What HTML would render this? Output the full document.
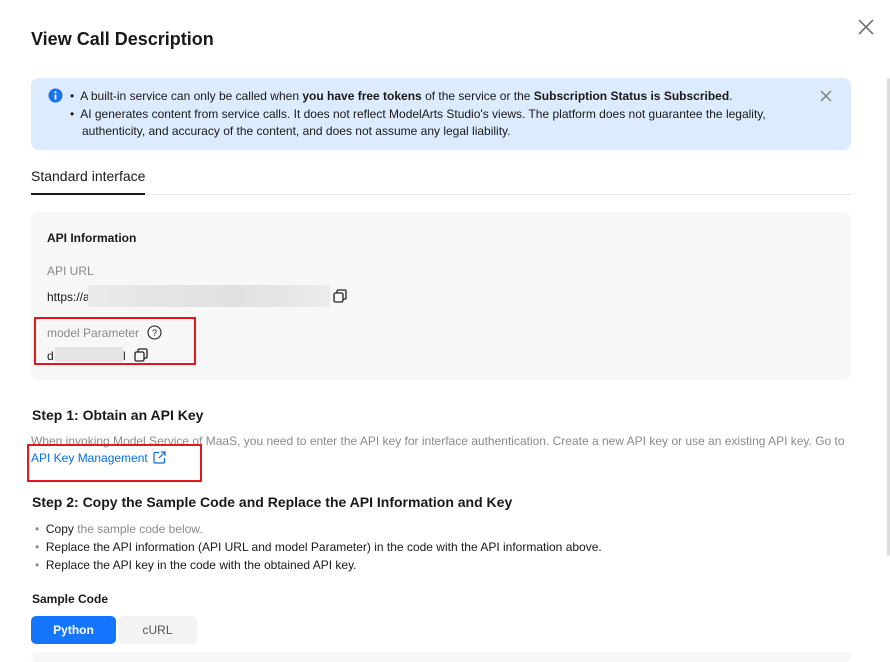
<!DOCTYPE html>
<html><head><style>
*{margin:0;padding:0;box-sizing:border-box}
body{width:890px;height:658px;overflow:hidden;background:#fff;font-family:"Liberation Sans",sans-serif;color:#191919;position:relative}
.a{position:absolute}
.t12{font-size:12px}
.g{color:#8a8a8a}
</style></head><body>
<div class="a" style="left:31px;top:29px;font-size:18px;font-weight:bold">View Call Description</div>
<svg class="a" style="left:857px;top:18px" width="18" height="18"><path d="M2 2L16 16M16 2L2 16" stroke="#777" stroke-width="1.6"/></svg>
<div class="a" style="left:887px;top:78px;width:3px;height:478px;background:#ddd;border-radius:2px"></div>

<div class="a" style="left:31px;top:78px;width:820px;height:72px;background:#dcebfd;border-radius:8px"></div>
<svg class="a" style="left:48px;top:88px" width="15" height="15"><circle cx="7.5" cy="7.5" r="7" fill="#1a73e8"/><rect x="6.6" y="6.5" width="1.8" height="5" fill="#fff"/><circle cx="7.5" cy="4.3" r="1.1" fill="#fff"/></svg>
<svg class="a" style="left:820px;top:90px" width="12" height="12"><path d="M1 1L11 11M11 1L1 11" stroke="#777" stroke-width="1.3"/></svg>
<div class="a t12" style="left:70px;top:88px;line-height:17.5px;width:740px">
<div>•&nbsp; A built-in service can only be called when <b>you have free tokens</b> of the service or the <b>Subscription Status is Subscribed</b>.</div>
<div>•&nbsp; AI generates content from service calls. It does not reflect ModelArts Studio's views. The platform does not guarantee the legality,</div>
<div style="padding-left:12px">authenticity, and accuracy of the content, and does not assume any legal liability.</div>
</div>

<div class="a" style="left:31px;top:168px;font-size:14px">Standard interface</div>
<div class="a" style="left:31px;top:194px;width:820px;height:1px;background:#e6e6e6"></div>
<div class="a" style="left:31px;top:193px;width:114px;height:2px;background:#191919"></div>

<div class="a" style="left:31px;top:212px;width:820px;height:168px;background:#f7f7f7;border-radius:8px"></div>
<div class="a t12" style="left:47px;top:231px;font-weight:bold">API Information</div>
<div class="a t12 g" style="left:47px;top:264px">API URL</div>
<div class="a t12" style="left:47px;top:290px">https://a</div>
<div class="a" style="left:88px;top:285px;width:242px;height:22px;background:linear-gradient(90deg,#eaeaea,#e0e0e0 60%,#ececec)"></div>
<svg class="a" style="left:333px;top:289px" width="14" height="14" fill="none" stroke="#222" stroke-width="1.3"><rect x="1" y="4" width="9" height="9" rx="1.5"/><path d="M4 4V2.5Q4 1 5.5 1H12Q13 1 13 2.5V9Q13 10 12 10H10"/></svg>
<div class="a t12 g" style="left:47px;top:326px">model Parameter</div>
<svg class="a" style="left:147px;top:325px" width="15" height="15"><circle cx="7.5" cy="7.5" r="6.5" fill="none" stroke="#222" stroke-width="1.1"/><text x="7.5" y="11" font-size="9" text-anchor="middle" font-family="Liberation Sans" fill="#222">?</text></svg>
<div class="a t12" style="left:47px;top:349px">d</div>
<div class="a" style="left:55px;top:347px;width:68px;height:15px;background:#e4e4e4"></div>
<div class="a t12" style="left:123px;top:349px">l</div>
<svg class="a" style="left:134px;top:348px" width="14" height="14" fill="none" stroke="#222" stroke-width="1.3"><rect x="1" y="4" width="9" height="9" rx="1.5"/><path d="M4 4V2.5Q4 1 5.5 1H12Q13 1 13 2.5V9Q13 10 12 10H10"/></svg>
<div class="a" style="left:34px;top:317px;width:162px;height:48px;border:2px solid #e8141e"></div>

<div class="a" style="left:32px;top:407px;font-size:14px;font-weight:bold">Step 1: Obtain an API Key</div>
<div class="a t12 g" style="left:31px;top:434px">When invoking Model Service of MaaS, you need to enter the API key for interface authentication. Create a new API key or use an existing API key. Go to</div>
<div class="a t12" style="left:31px;top:451px;color:#0b6ee0">API Key Management</div>
<svg class="a" style="left:153px;top:451px" width="13" height="13" fill="none" stroke="#0b6ee0" stroke-width="1.2"><path d="M6 1.5H2Q1 1.5 1 2.5V11Q1 12 2 12H10.5Q11.5 12 11.5 11V7M8 1H12V5M12 1L6 7"/></svg>
<div class="a" style="left:27px;top:444px;width:175px;height:38px;border:2px solid #e8141e"></div>

<div class="a" style="left:32px;top:494px;font-size:14px;font-weight:bold">Step 2: Copy the Sample Code and Replace the API Information and Key</div>
<div class="a t12" style="left:35px;top:520px;line-height:18px">
<div><span class="g">•</span>&nbsp; Copy <span class="g">the sample code below.</span></div>
<div><span class="g">•</span>&nbsp; Replace the API information (API URL and model Parameter) in the code with the API information above.</div>
<div><span class="g">•</span>&nbsp; Replace the API key in the code with the obtained API key.</div>
</div>
<div class="a t12" style="left:32px;top:592px;font-weight:bold">Sample Code</div>
<div class="a t12" style="left:31px;top:616px;width:85px;height:28px;background:#1476ff;border-radius:5px;color:#fff;text-align:center;line-height:28px;font-weight:bold">Python</div>
<div class="a t12" style="left:118px;top:616px;width:79px;height:28px;background:#f3f3f3;border-radius:5px;color:#555;text-align:center;line-height:28px">cURL</div>
<div class="a" style="left:31px;top:652px;width:820px;height:10px;background:#f7f7f7;border-radius:6px"></div>
</body></html>
